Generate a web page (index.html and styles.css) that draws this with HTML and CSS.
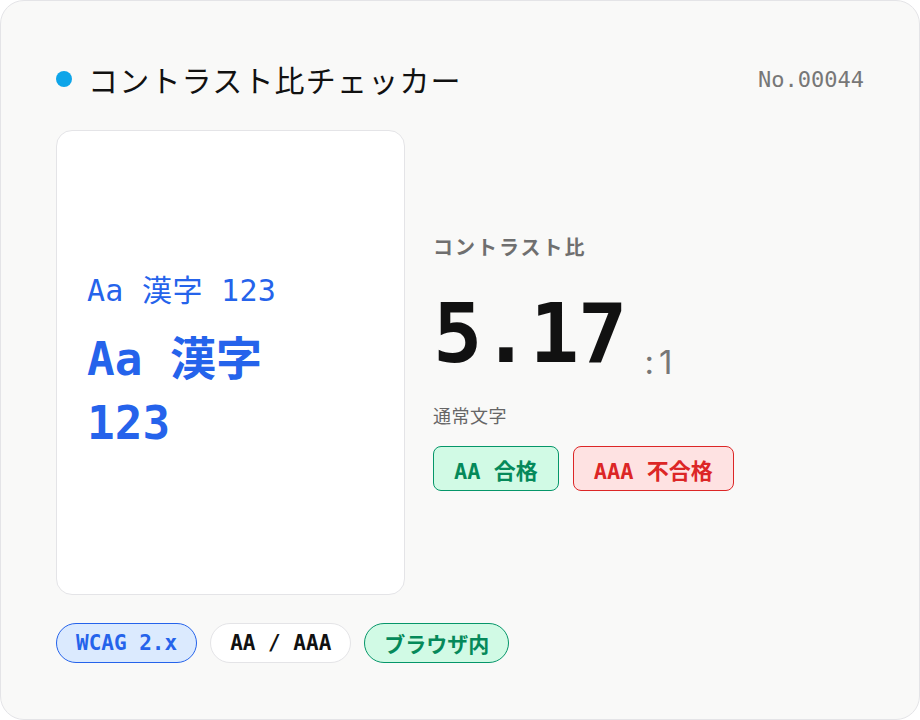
FILE: index.html
```html
<!DOCTYPE html>
<html lang="ja">
<head>
    <meta charset="UTF-8">
    <meta name="viewport" content="width=device-width, initial-scale=1.0">
    <title>コントラスト比チェッカー</title>
    <link rel="stylesheet" href="styles.css">
</head>
<body>

<div class="card">
    <header class="card-head">
        <div class="title">
            <span class="dot"></span>
            <h1>コントラスト比チェッカー</h1>
        </div>
        <span class="serial">No.00044</span>
    </header>

    <main class="card-body">
        <div class="preview">
            <p class="sample-sm">Aa 漢字 123</p>
            <p class="sample-lg">Aa 漢字<br>123</p>
        </div>

        <div class="result">
            <div class="label">コントラスト比</div>
            <div class="ratio">
                <span class="ratio-num">5.17</span>
                <span class="ratio-unit">:1</span>
            </div>
            <div class="sub">通常文字</div>
            <div class="badges">
                <span class="badge pass">AA 合格</span>
                <span class="badge fail">AAA 不合格</span>
            </div>
        </div>
    </main>

    <footer class="tags">
        <span class="tag tag-blue">WCAG 2.x</span>
        <span class="tag tag-plain">AA / AAA</span>
        <span class="tag tag-green">ブラウザ内</span>
    </footer>
</div>

</body>
</html>
```

FILE: styles.css
```css
body {
    margin: 0;
    padding: 0;
    background-color: #fff;
    font-family: Inter, "Noto Sans CJK JP", sans-serif;
}
.card {
    box-sizing: border-box;
    width: 920px;
    height: 720px;
    background-color: #f9f9f8;
    border: 1px solid #e4e4e7;
    border-radius: 24px;
    padding: 55px 55px 56px 55px;
    display: flex;
    flex-direction: column;
}
.card-head {
    display: flex;
    justify-content: space-between;
    align-items: center;
    height: 46px;
}
.title {
    display: flex;
    align-items: center;
    gap: 16px;
}
.dot {
    width: 16px;
    height: 16px;
    border-radius: 50%;
    background-color: #0ea5e9;
}
h1 {
    margin: 0;
    font-size: 30px;
    font-weight: 400;
    letter-spacing: 1.2px;
    color: #111;
    font-family: "Noto Sans CJK JP", sans-serif;
}
.serial {
    font-family: "DejaVu Sans Mono", monospace;
    font-size: 22px;
    color: #777;
}
.card-body {
    flex: 1;
    display: flex;
    align-items: center;
    gap: 28px;
    margin-top: 28px;
    margin-bottom: 28px;
}
.preview {
    box-sizing: border-box;
    width: 349px;
    height: 100%;
    background-color: #fff;
    border: 1px solid #e4e4e7;
    border-radius: 16px;
    padding: 0 30px;
    display: flex;
    flex-direction: column;
    justify-content: center;
    color: #2563eb;
    font-family: "DejaVu Sans Mono", "Noto Sans CJK JP", monospace;
}
.preview p {
    margin: 0;
}
.sample-sm {
    font-size: 30px;
    letter-spacing: 0.3px;
    line-height: 40px;
}
.sample-lg {
    margin-top: 16px !important;
    font-size: 46px;
    font-weight: bold;
    line-height: 64px;
}
.result {
    display: flex;
    flex-direction: column;
}
.label {
    font-size: 20px;
    font-weight: bold;
    letter-spacing: 2px;
    color: #6f6f6f;
    font-family: "Noto Sans CJK JP", sans-serif;
    line-height: 26px;
}
.ratio {
    display: flex;
    align-items: baseline;
    margin-top: 32px;
}
.ratio-num {
    font-family: "DejaVu Sans Mono", monospace;
    font-size: 82px;
    font-weight: bold;
    letter-spacing: -1px;
    color: #111;
    line-height: 84px;
}
.ratio-unit {
    font-size: 33px;
    color: #777;
    letter-spacing: 5px;
    margin-left: 18px;
    position: relative;
    top: 12px;
}
.sub {
    margin-top: 26px;
    font-size: 18px;
    letter-spacing: 0.5px;
    color: #666;
    font-family: "Noto Sans CJK JP", sans-serif;
}
.badges {
    display: flex;
    gap: 14px;
    margin-top: 18px;
}
.badge {
    box-sizing: border-box;
    height: 45px;
    padding: 0 20px;
    border-radius: 8px;
    display: flex;
    align-items: center;
    font-family: "DejaVu Sans Mono", "Noto Sans CJK JP", monospace;
    font-size: 22px;
    font-weight: bold;
}
.pass {
    background-color: #d1fae5;
    border: 1px solid #059669;
    color: #05895a;
}
.fail {
    background-color: #fee2e2;
    border: 1px solid #dc2626;
    color: #dc2626;
}
.tags {
    display: flex;
    gap: 13px;
}
.tag {
    box-sizing: border-box;
    height: 40px;
    padding: 0 19px;
    border-radius: 20px;
    display: flex;
    align-items: center;
    font-family: "DejaVu Sans Mono", "Noto Sans CJK JP", monospace;
    font-size: 21px;
    font-weight: bold;
}
.tag-blue {
    background-color: #dbeafe;
    border: 1px solid #2563eb;
    color: #2563eb;
}
.tag-plain {
    background-color: #fff;
    border: 1px solid #e4e4e7;
    color: #111;
}
.tag-green {
    background-color: #d1fae5;
    border: 1px solid #059669;
    color: #05895a;
}
```
